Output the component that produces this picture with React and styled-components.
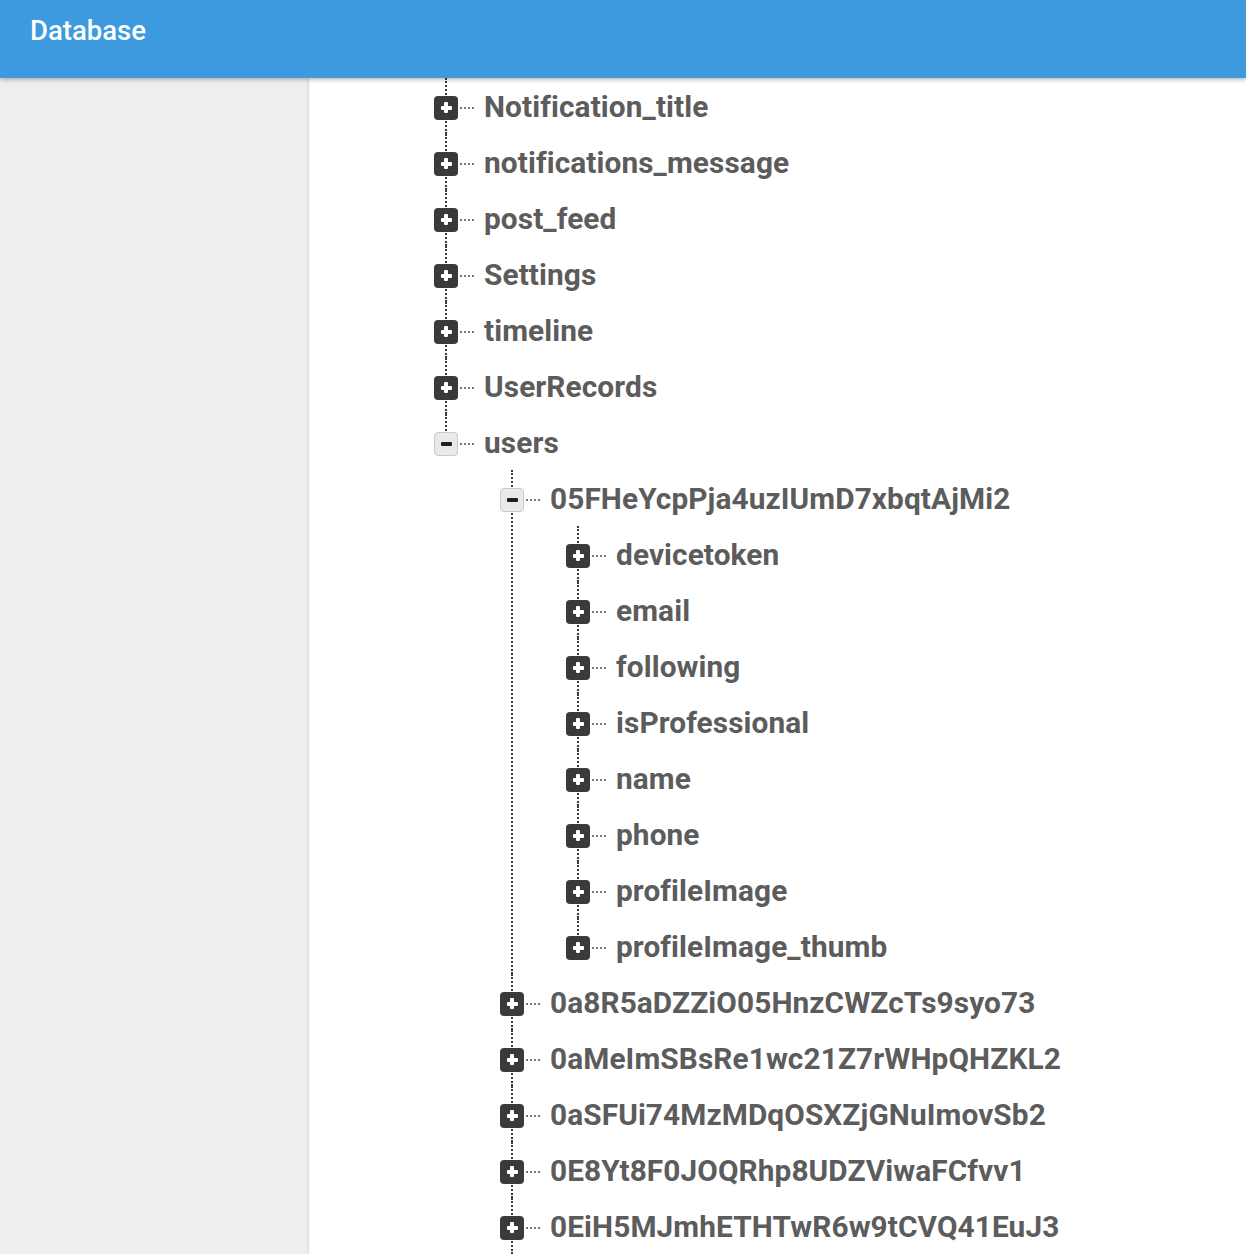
import styled, { createGlobalStyle } from "styled-components";

const GlobalStyle = createGlobalStyle`
  html, body {
    margin: 0;
    padding: 0;
    background: #ffffff;
    font-family: Roboto, "Noto Sans", sans-serif;
  }
  body {
    overflow: hidden;
  }
`;

const Page = styled.div`
  display: flex;
  flex-direction: column;
  height: 1254px;
  overflow: hidden;
`;

const Header = styled.header`
  position: relative;
  z-index: 2;
  flex: 0 0 78px;
  display: flex;
  align-items: center;
  padding: 0 30px 17px;
  box-sizing: border-box;
  background: #3d9ade;
  box-shadow: 0 2px 4px rgba(0, 0, 0, 0.25);
  color: #ffffff;
  font-size: 27.5px;
  font-weight: 500;
`;

const Body = styled.div`
  flex: 1;
  display: flex;
  min-height: 0;
`;

const Sidebar = styled.aside`
  position: relative;
  z-index: 1;
  flex: 0 0 307px;
  background: #edeef0;
  box-shadow: 1px 0 3px rgba(0, 0, 0, 0.22);
`;

const Content = styled.main`
  flex: 1;
  padding-left: 127px;
  overflow: hidden;
`;

const List = styled.ul`
  list-style: none;
  margin: 0;
  padding: 0 0 0 ${(p) => p.$indent || 0}px;
`;

const Item = styled.li`
  position: relative;

  &::before {
    content: "";
    position: absolute;
    left: 11px;
    top: 0;
    bottom: 0;
    border-left: 2px dotted #3a3a3a;
  }

  &:last-child::before {
    bottom: auto;
    height: 28px;
  }

  ${(p) =>
    p.$continues &&
    `
    &:last-child::before { bottom: 0; height: auto; }
  `}
`;

const Row = styled.div`
  position: relative;
  display: flex;
  align-items: center;
  height: 56px;
`;

const Toggle = styled.span`
  position: relative;
  z-index: 1;
  flex: 0 0 auto;
  width: 24px;
  height: 24px;
  margin-top: 3px;
  box-sizing: border-box;
  border-radius: 4px;
  display: flex;
  align-items: center;
  justify-content: center;
  background: ${(p) => (p.$open ? "#e9e9e9" : "#3a3a3a")};
  border: ${(p) => (p.$open ? "1px solid #c9c9c9" : "none")};

  &::before,
  &::after {
    content: "";
    position: absolute;
    background: ${(p) => (p.$open ? "#1f1f1f" : "#ffffff")};
    border-radius: 1px;
  }
  &::before {
    width: 11px;
    height: 4px;
  }
  &::after {
    width: 4px;
    height: 11px;
    display: ${(p) => (p.$open ? "none" : "block")};
  }
`;

const Stub = styled.span`
  flex: 0 0 14px;
  margin: 3px 10px 0 2px;
  border-top: 2px dotted #7a7a7a;
`;

const Label = styled.span`
  color: #5c5c5c;
  font-size: 29.8px;
  font-weight: 700;
  white-space: nowrap;
  letter-spacing: 0.1px;
`;

const topKeys = [
  "Notification_title",
  "notifications_message",
  "post_feed",
  "Settings",
  "timeline",
  "UserRecords",
];

const userFields = [
  "devicetoken",
  "email",
  "following",
  "isProfessional",
  "name",
  "phone",
  "profileImage",
  "profileImage_thumb",
];

const otherUsers = [
  "0a8R5aDZZiO05HnzCWZcTs9syo73",
  "0aMeImSBsRe1wc21Z7rWHpQHZKL2",
  "0aSFUi74MzMDqOSXZjGNuImovSb2",
  "0E8Yt8F0JOQRhp8UDZViwaFCfvv1",
  "0EiH5MJmhETHTwR6w9tCVQ41EuJ3",
];

function Node({ label, open }) {
  return (
    <Row>
      <Toggle $open={open} />
      <Stub />
      <Label>{label}</Label>
    </Row>
  );
}

export default function App() {
  return (
    <>
      <GlobalStyle />
      <Page>
        <Header>Database</Header>
        <Body>
          <Sidebar />
          <Content>
            <List>
              {topKeys.map((k) => (
                <Item key={k}>
                  <Node label={k} />
                </Item>
              ))}
              <Item>
                <Node label="users" open />
                <List $indent={66}>
                  <Item>
                    <Node label="05FHeYcpPja4uzIUmD7xbqtAjMi2" open />
                    <List $indent={66}>
                      {userFields.map((f) => (
                        <Item key={f}>
                          <Node label={f} />
                        </Item>
                      ))}
                    </List>
                  </Item>
                  {otherUsers.map((u) => (
                    <Item key={u} $continues>
                      <Node label={u} />
                    </Item>
                  ))}
                </List>
              </Item>
            </List>
          </Content>
        </Body>
      </Page>
    </>
  );
}
